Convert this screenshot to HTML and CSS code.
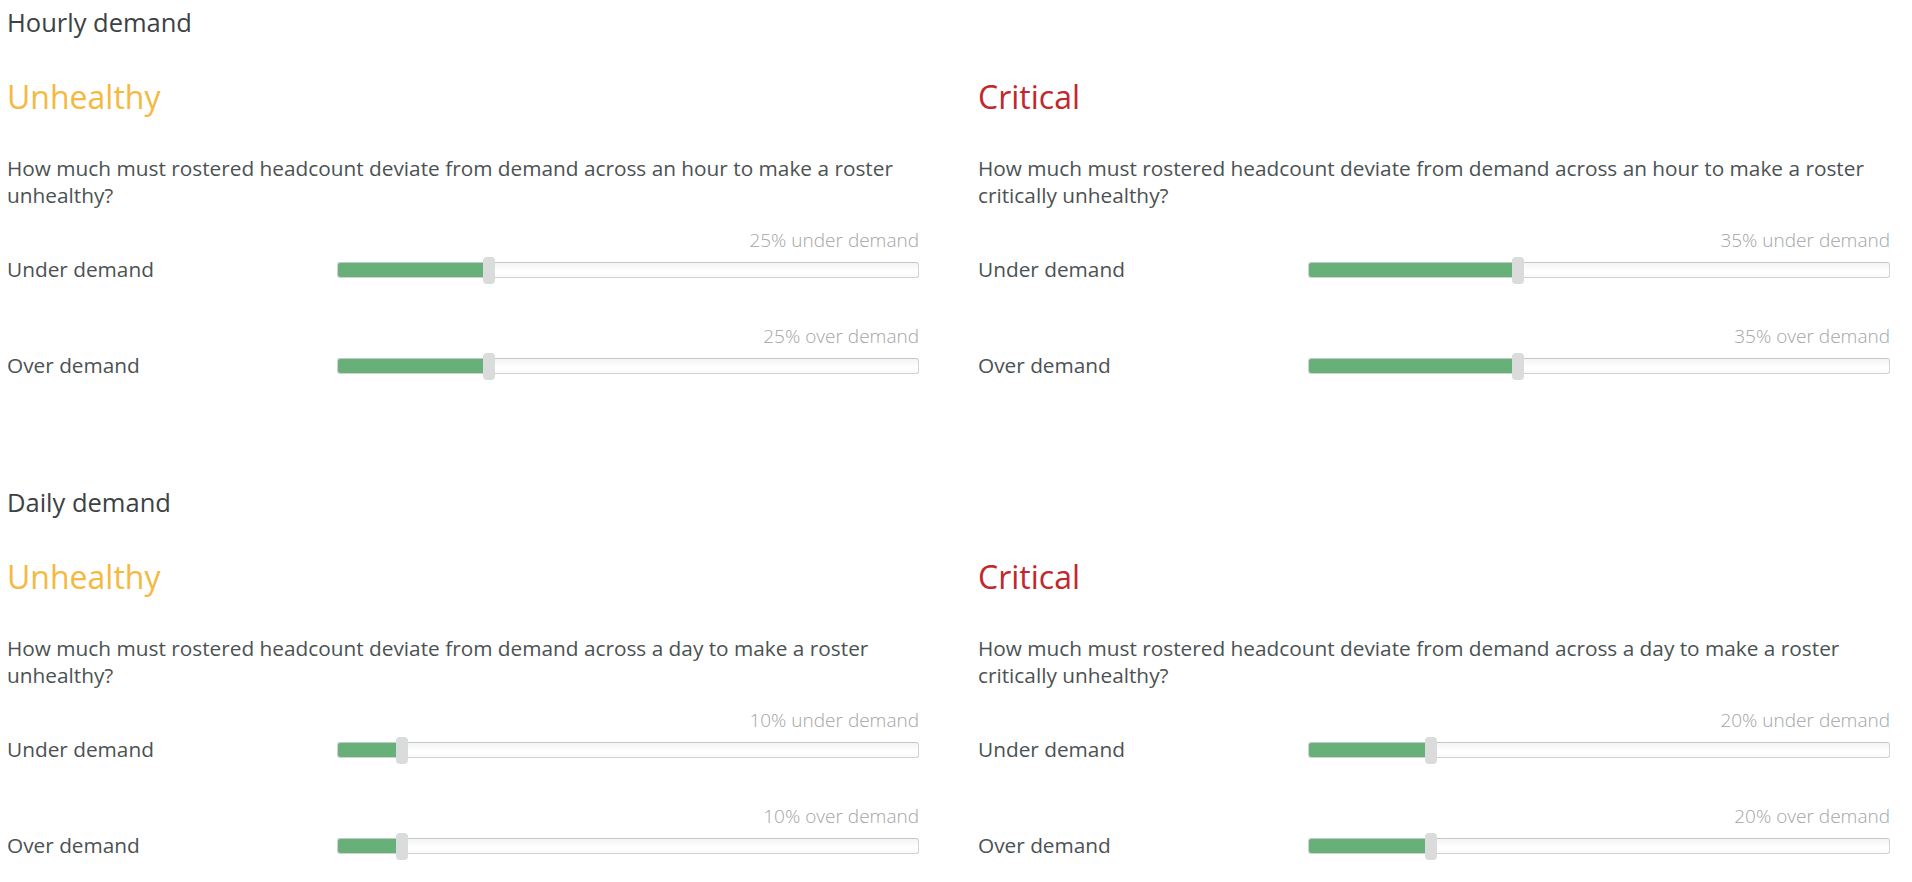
FILE: index.html
```html
<!DOCTYPE html>
<html lang="en">
<head>
<meta charset="utf-8">
<title>Demand health thresholds</title>
<link rel="stylesheet" href="styles.css">
</head>
<body>
<main class="page">
  <section class="section">
    <h2 class="section-title">Hourly demand</h2>
    <div class="columns">
      <div class="panel">
        <h3 class="level level-unhealthy">Unhealthy</h3>
        <p class="question">How much must rostered headcount deviate from demand across an hour to make a roster unhealthy?</p>
        <div class="field">
          <div class="value">25% under demand</div>
          <div class="row">
            <span class="label">Under demand</span>
            <div class="track"><div class="fill" style="width:25%"></div><div class="handle" style="left:25%"></div></div>
          </div>
        </div>
        <div class="field">
          <div class="value">25% over demand</div>
          <div class="row">
            <span class="label">Over demand</span>
            <div class="track"><div class="fill" style="width:25%"></div><div class="handle" style="left:25%"></div></div>
          </div>
        </div>
      </div>
      <div class="panel">
        <h3 class="level level-critical">Critical</h3>
        <p class="question">How much must rostered headcount deviate from demand across an hour to make a roster critically unhealthy?</p>
        <div class="field">
          <div class="value">35% under demand</div>
          <div class="row">
            <span class="label">Under demand</span>
            <div class="track"><div class="fill" style="width:35%"></div><div class="handle" style="left:35%"></div></div>
          </div>
        </div>
        <div class="field">
          <div class="value">35% over demand</div>
          <div class="row">
            <span class="label">Over demand</span>
            <div class="track"><div class="fill" style="width:35%"></div><div class="handle" style="left:35%"></div></div>
          </div>
        </div>
      </div>
    </div>
  </section>
  <section class="section">
    <h2 class="section-title">Daily demand</h2>
    <div class="columns">
      <div class="panel">
        <h3 class="level level-unhealthy">Unhealthy</h3>
        <p class="question">How much must rostered headcount deviate from demand across a day to make a roster unhealthy?</p>
        <div class="field">
          <div class="value">10% under demand</div>
          <div class="row">
            <span class="label">Under demand</span>
            <div class="track"><div class="fill" style="width:10%"></div><div class="handle" style="left:10%"></div></div>
          </div>
        </div>
        <div class="field">
          <div class="value">10% over demand</div>
          <div class="row">
            <span class="label">Over demand</span>
            <div class="track"><div class="fill" style="width:10%"></div><div class="handle" style="left:10%"></div></div>
          </div>
        </div>
      </div>
      <div class="panel">
        <h3 class="level level-critical">Critical</h3>
        <p class="question">How much must rostered headcount deviate from demand across a day to make a roster critically unhealthy?</p>
        <div class="field">
          <div class="value">20% under demand</div>
          <div class="row">
            <span class="label">Under demand</span>
            <div class="track"><div class="fill" style="width:20%"></div><div class="handle" style="left:20%"></div></div>
          </div>
        </div>
        <div class="field">
          <div class="value">20% over demand</div>
          <div class="row">
            <span class="label">Over demand</span>
            <div class="track"><div class="fill" style="width:20%"></div><div class="handle" style="left:20%"></div></div>
          </div>
        </div>
      </div>
    </div>
  </section>
</main>
</body>
</html>
```

FILE: styles.css
```css
* { box-sizing: border-box; }

html, body {
  margin: 0;
  padding: 0;
  background: #ffffff;
}

body {
  font-family: "Open Sans", "Liberation Sans", sans-serif;
  color: #4b5253;
  font-size: 20.8px;
  line-height: 27px;
}

.page {
  padding: 7px 0 0 7px;
}

.section {
  height: 480px;
}

.section-title {
  margin: 0;
  font-size: 25.5px;
  line-height: 30px;
  font-weight: 400;
  color: #3c4243;
}

.columns {
  display: grid;
  grid-template-columns: 912px 912px;
  column-gap: 59px;
}

.level {
  margin: 40px 0 0;
  font-size: 32px;
  line-height: 40px;
  font-weight: 400;
}

.level-unhealthy { color: #f5b942; }
.level-critical { color: #c1272d; }

.question {
  margin: 38px 0 0;
  font-size: 20.8px;
  line-height: 27px;
}

.field {
  margin-top: 21px;
}

.field + .field {
  margin-top: 43px;
}

.value {
  text-align: right;
  font-size: 19px;
  line-height: 20px;
  font-weight: 300;
  color: #a3a5a5;
}

.row {
  display: grid;
  grid-template-columns: 330px 1fr;
  align-items: center;
  height: 27px;
  margin-top: 6px;
}

.label {
  font-size: 20.8px;
  line-height: 27px;
}

.track {
  position: relative;
  height: 16px;
  border: 1px solid #d2d2d2;
  border-top-color: #c6c6c6;
  border-radius: 3px;
  background: linear-gradient(#f4f4f4, #ffffff 60%, #fafafa);
}

.fill {
  position: absolute;
  left: 0;
  top: 0;
  bottom: 0;
  background: #68b07a;
  border-radius: 2px 0 0 2px;
}

.handle {
  position: absolute;
  top: -6px;
  width: 12px;
  height: 27px;
  background: #dadcdc;
  border-radius: 4px;
}
```
